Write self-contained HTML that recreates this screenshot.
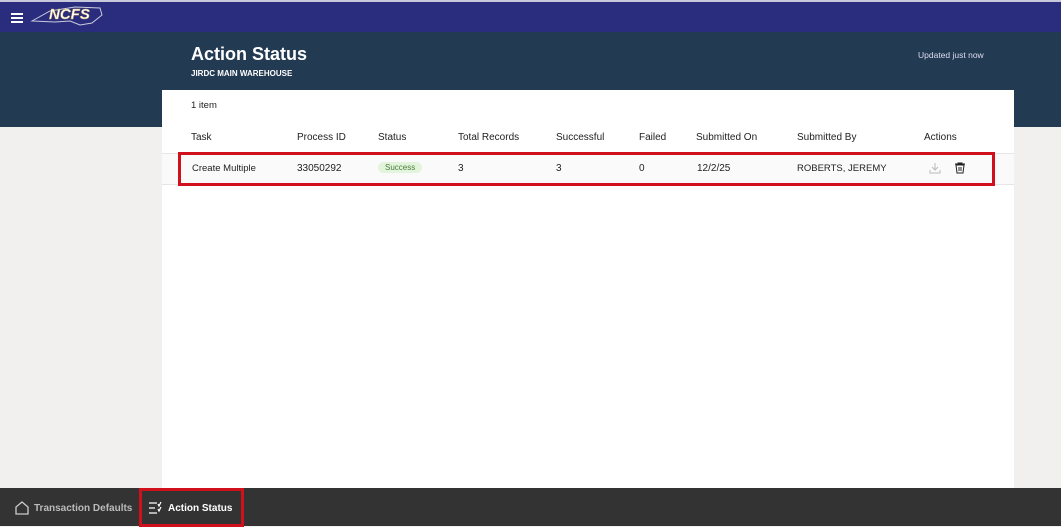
<!DOCTYPE html><html><head><style>
body{margin:0;width:1061px;height:526px;overflow:hidden;background:#f1f0ef;font-family:"Liberation Sans",sans-serif;position:relative}
.top{position:absolute;left:0;top:0;width:1061px;height:32px;background:#2a2d7e;border-top:2px solid #c8c8dc;box-sizing:border-box}
.hero{position:absolute;left:0;top:32px;width:1061px;height:95px;background:#233a53}
.card{position:absolute;left:162px;top:90px;width:852px;height:398px;background:#fff}
.t{position:absolute;font-size:10px;color:#222;white-space:nowrap}
.foot{position:absolute;left:0;top:488px;width:1061px;height:38px;background:#333}
</style></head><body>
<div class="top">
<div style="position:absolute;left:11px;top:11px;width:12px;height:2px;background:#fff;box-shadow:0 4px 0 #fff,0 8px 0 #fff"></div>
<svg style="position:absolute;left:30px;top:1px" width="75" height="28"><path d="M2 18 L20 8 L45 4 L70 5 L72 12 L62 20 L50 22 L40 18 L25 19 Z" fill="none" stroke="#ccd" stroke-width="1"/><text x="19" y="16" font-family="Liberation Sans" font-weight="bold" font-style="italic" font-size="15" fill="#fff" stroke="#c9a24a" stroke-width=".4">NCFS</text></svg>
</div>
<div class="hero">
<div style="position:absolute;left:191px;top:12px;color:#fff;font-size:18px;font-weight:bold">Action Status</div>
<div style="position:absolute;left:191px;top:37px;color:#fff;font-size:8px;font-weight:bold">JIRDC MAIN WAREHOUSE</div>
<div style="position:absolute;left:918px;top:18px;color:#dde;font-size:8.5px">Updated just now</div>
</div>
<div class="card">
<div class="t" style="left:29px;top:10px;font-size:9.5px">1 item</div>
<div class="t" style="left:29px;top:42px">Task</div><div class="t" style="left:135px;top:42px">Process ID</div><div class="t" style="left:216px;top:42px">Status</div><div class="t" style="left:296px;top:42px">Total Records</div><div class="t" style="left:394px;top:42px">Successful</div><div class="t" style="left:477px;top:42px">Failed</div><div class="t" style="left:534px;top:42px">Submitted On</div><div class="t" style="left:635px;top:42px">Submitted By</div><div class="t" style="left:762px;top:42px">Actions</div>
<div style="position:absolute;left:0;top:63px;width:852px;height:30px;border-top:1px solid #e6e6e6;border-bottom:1px solid #e6e6e6;background:#fafafa"></div>
<div class="t" style="left:30px;top:73px;font-size:9.5px">Create Multiple</div><div class="t" style="left:135px;top:73px">33050292</div>
<div class="t" style="left:216px;top:72px;background:#e3f4dc;color:#4a7a3a;border-radius:7px;padding:1px 7px;font-size:8px">Success</div>
<div class="t" style="left:296px;top:73px">3</div><div class="t" style="left:394px;top:73px">3</div><div class="t" style="left:477px;top:73px">0</div><div class="t" style="left:535px;top:73px">12/2/25</div><div class="t" style="left:635px;top:73px;font-size:9.5px">ROBERTS, JEREMY</div>
<svg style="position:absolute;left:767px;top:72px" width="12" height="12"><path d="M6 1V8M3 5L6 8L9 5M1 8V11H11V8" fill="none" stroke="#bbb"/></svg>
<svg style="position:absolute;left:792px;top:72px" width="12" height="12"><path d="M1 2H11M4 2V1H8V2M2 3H10L9 11H3Z M5 5V9M7 5V9" fill="none" stroke="#222"/></svg>
<div style="position:absolute;left:16px;top:62px;width:811px;height:28px;border:3px solid #d0101a;box-sizing:content-box"></div>
</div>
<div class="foot">
<svg style="position:absolute;left:15px;top:13px" width="14" height="14"><path d="M1 13V6L7 1L13 6V13Z" fill="none" stroke="#ccc" stroke-width="1.3"/></svg>
<div style="position:absolute;left:34px;top:15px;color:#bbb;font-size:10px;font-weight:bold">Transaction Defaults</div>
<div style="position:absolute;left:139px;top:0;width:99px;height:33px;border:3px solid #d0101a"></div>
<svg style="position:absolute;left:148px;top:13px" width="14" height="14"><path d="M1 2H9M1 7H7M1 12H9M10 3L11 5L13 1M10 8L11 10L13 6" fill="none" stroke="#fff" stroke-width="1.2"/></svg>
<div style="position:absolute;left:168px;top:15px;color:#fff;font-size:10px;font-weight:bold">Action Status</div>
</div>
</body></html>
